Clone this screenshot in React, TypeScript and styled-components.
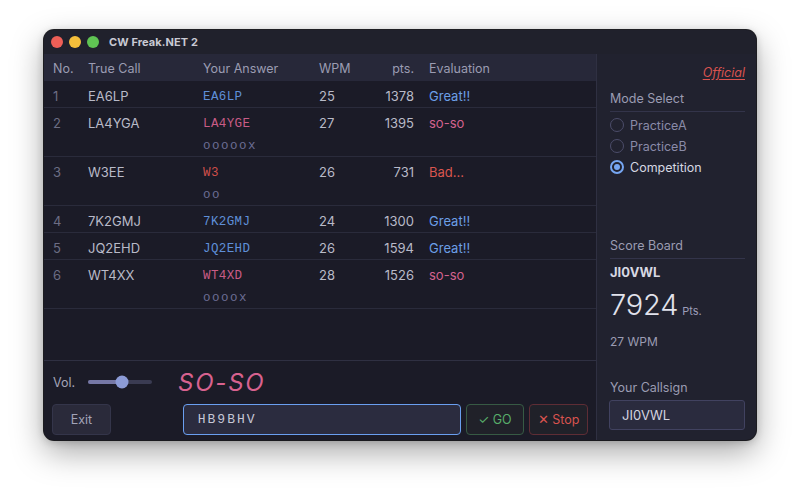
import React from "react";
import styled, { createGlobalStyle, css } from "styled-components";

const Global = createGlobalStyle`
  html, body { margin: 0; padding: 0; background: #ffffff; }
  body { font-family: Inter, "Noto Sans", sans-serif; -webkit-font-smoothing: antialiased; }
  * { box-sizing: border-box; }
`;

const Page = styled.div`
  width: 800px;
  height: 498px;
  padding: 30px 44px 0;
`;

const Window = styled.div`
  width: 712px;
  height: 410px;
  border-radius: 10px;
  background: #1b1b27;
  overflow: hidden;
  display: grid;
  grid-template-rows: 24px 1fr;
  box-shadow: 0 0 0 1px rgba(10, 10, 14, 0.9), 0 12px 32px rgba(0, 0, 0, 0.35), 0 2px 8px rgba(0, 0, 0, 0.2);
`;

const TitleBar = styled.div`
  background: #20212c;
  display: flex;
  align-items: center;
  padding-left: 7px;
  gap: 6px;
`;

const Light = styled.span<{ $c: string }>`
  width: 12px;
  height: 12px;
  border-radius: 50%;
  background: ${(p) => p.$c};
`;

const Title = styled.span`
  margin-left: 4px;
  font-size: 11px;
  font-weight: 700;
  color: #c9cad4;
  letter-spacing: 0.1px;
`;

const Body = styled.div`
  display: grid;
  grid-template-columns: 553px 1fr;
  grid-template-rows: 307px 1fr;
  min-height: 0;
`;

const TableArea = styled.div`
  background: #1b1b27;
  border-right: 1px solid #2f3042;
  border-bottom: 1px solid #2f3042;
  overflow: hidden;
`;

const cols = css`
  display: grid;
  grid-template-columns: 35px 115px 116px 40px 55px 1fr;
  padding-left: 9px;
`;

const HeaderRow = styled.div`
  ${cols};
  height: 27px;
  padding-top: 1px;
  align-items: center;
  background: #272839;
  color: #9b9cb2;
  font-size: 12.5px;
`;

const Row = styled.div`
  ${cols};
  padding-top: 5px;
  border-bottom: 1px solid #2a2b3b;
  font-size: 13px;
  color: #b9bac8;
`;

const Cell = styled.div<{ $right?: boolean; $pad?: boolean }>`
  line-height: 21px;
  height: 21px;
  white-space: nowrap;
  text-align: ${(p) => (p.$right ? "right" : "left")};
  padding-left: ${(p) => (p.$pad ? "15px" : "0")};
`;

const HeadCell = styled.div<{ $right?: boolean; $pad?: boolean }>`
  text-align: ${(p) => (p.$right ? "right" : "left")};
  padding-left: ${(p) => (p.$pad ? "15px" : "0")};
`;

const NoCell = styled(Cell)`
  color: #6c6d84;
`;

const AnswerCell = styled.div`
  display: flex;
  flex-direction: column;
`;

const tone = {
  good: "#6c9fe6",
  soso: "#d3628e",
  bad: "#d9564f",
};

type Tone = keyof typeof tone;

const Answer = styled.div<{ $t: Tone }>`
  font-family: "Liberation Mono", "DejaVu Sans Mono", monospace;
  font-size: 12.5px;
  letter-spacing: 0.4px;
  padding-top: 1px;
  line-height: 20px;
  height: 21px;
  color: ${(p) => (p.$t === "good" ? "#5f8fd8" : p.$t === "soso" ? "#c95c86" : "#cf4f4a")};
`;

const Marks = styled.div`
  font-family: "Liberation Mono", "DejaVu Sans Mono", monospace;
  font-size: 12.5px;
  letter-spacing: 1.5px;
  padding-top: 3px;
  line-height: 19px;
  height: 22px;
  color: #6b6d94;
`;

const Eval = styled(Cell)<{ $t: Tone }>`
  color: ${(p) => tone[p.$t]};
`;

const Side = styled.div`
  grid-row: 1 / span 2;
  grid-column: 2;
  background: #21222f;
  display: flex;
  flex-direction: column;
  padding: 0 11px 0 13px;
`;

const Official = styled.div`
  align-self: flex-end;
  margin-top: 11px;
  font-size: 12.5px;
  font-style: italic;
  color: #d9534f;
  text-decoration: underline;
  text-underline-offset: 2px;
`;

const SectionTitle = styled.div<{ $top: number }>`
  margin-top: ${(p) => p.$top}px;
  padding-bottom: 5px;
  border-bottom: 1px solid #33344a;
  font-size: 12.5px;
  color: #9b9cb2;
`;

const RadioList = styled.div`
  display: flex;
  flex-direction: column;
  gap: 5px;
  margin-top: 5px;
`;

const RadioRow = styled.div<{ $on?: boolean }>`
  display: flex;
  align-items: center;
  gap: 6px;
  height: 16px;
  font-size: 12.5px;
  color: ${(p) => (p.$on ? "#d6d7e2" : "#8a8ba8")};
`;

const Dot = styled.span<{ $on?: boolean }>`
  width: 14px;
  height: 14px;
  border-radius: 50%;
  border: ${(p) => (p.$on ? "2px solid #76a6f2" : "1.5px solid #4c4d6a")};
  display: grid;
  place-items: center;
  &::after {
    content: "";
    width: 6px;
    height: 6px;
    border-radius: 50%;
    background: ${(p) => (p.$on ? "#76a6f2" : "transparent")};
  }
`;

const Callsign = styled.div`
  margin-top: 5px;
  font-size: 13px;
  font-weight: 700;
  color: #d8d9e3;
`;

const Score = styled.div`
  display: flex;
  align-items: baseline;
  gap: 4px;
  margin-top: 7px;
`;

const ScoreNum = styled.span`
  font-size: 29px;
  font-weight: 300;
  color: #e2e3ec;
  letter-spacing: -0.2px;
`;

const ScoreUnit = styled.span`
  font-size: 11px;
  color: #9b9cb8;
`;

const Wpm = styled.div`
  margin-top: 12px;
  font-size: 12px;
  color: #9b9cb2;
`;

const Spacer = styled.div`
  flex: 1;
`;

const FieldLabel = styled.div`
  font-size: 12.5px;
  color: #9b9cb2;
  margin-bottom: 5px;
`;

const CallInput = styled.div`
  height: 30px;
  margin-bottom: 10px;
  margin-left: -1px;
  border: 1px solid #414260;
  border-radius: 3px;
  background: #2a2b3e;
  padding-left: 12px;
  display: flex;
  align-items: center;
  font-size: 13px;
  color: #d3d4e0;
`;

const Bottom = styled.div`
  background: #1b1b27;
  border-right: 1px solid #2f3042;
  padding: 7px 8px 0 8px;
  display: flex;
  flex-direction: column;
  gap: 8px;
`;

const TopLine = styled.div`
  display: flex;
  align-items: center;
  height: 28px;
`;

const VolLabel = styled.span`
  font-size: 12.5px;
  color: #a3a4b8;
  width: 36px;
  padding-left: 1px;
`;

const Track = styled.div`
  position: relative;
  width: 64px;
  height: 4px;
  border-radius: 2px;
  background: #3a3b52;
`;

const Fill = styled.div`
  height: 100%;
  border-radius: 2px;
  background: #7678a6;
`;

const Thumb = styled.div`
  position: absolute;
  top: 50%;
  width: 13px;
  height: 13px;
  border-radius: 50%;
  background: #8c9bd6;
  transform: translate(-50%, -50%);
`;

const Verdict = styled.span`
  margin-left: 26px;
  font-size: 24px;
  font-style: italic;
  letter-spacing: 1.8px;
  color: #d8628f;
`;

const Controls = styled.div`
  display: flex;
  align-items: center;
  gap: 5px;
  height: 31px;
`;

const Button = styled.button<{ $kind?: "go" | "stop" }>`
  height: 31px;
  width: 59px;
  border-radius: 4px;
  font-family: Inter, sans-serif;
  font-size: 12.5px;
  cursor: pointer;
  background: ${(p) => (p.$kind ? "#202129" : "#2a2a3a")};
  border: 1px solid
    ${(p) => (p.$kind === "go" ? "#375a44" : p.$kind === "stop" ? "#5e2d35" : "#34354a")};
  color: ${(p) => (p.$kind === "go" ? "#58ad6a" : p.$kind === "stop" ? "#d9534f" : "#a3a4b8")};
  padding: 0;
`;

const AnswerInput = styled.div`
  margin-left: 67px;
  width: 279px;
  height: 31px;
  border: 1.5px solid #6a9ff0;
  border-radius: 4px;
  background: #2b2c3f;
  display: flex;
  align-items: center;
  padding-left: 14px;
  font-family: "Liberation Mono", "DejaVu Sans Mono", monospace;
  font-size: 13px;
  letter-spacing: 2px;
  color: #c6c7d6;
`;

type Entry = {
  no: number;
  call: string;
  answer: string;
  wpm: number;
  pts: number;
  t: Tone;
  label: string;
  marks?: string;
};

const entries: Entry[] = [
  { no: 1, call: "EA6LP", answer: "EA6LP", wpm: 25, pts: 1378, t: "good", label: "Great!!" },
  { no: 2, call: "LA4YGA", answer: "LA4YGE", wpm: 27, pts: 1395, t: "soso", label: "so-so", marks: "ooooox" },
  { no: 3, call: "W3EE", answer: "W3", wpm: 26, pts: 731, t: "bad", label: "Bad...", marks: "oo" },
  { no: 4, call: "7K2GMJ", answer: "7K2GMJ", wpm: 24, pts: 1300, t: "good", label: "Great!!" },
  { no: 5, call: "JQ2EHD", answer: "JQ2EHD", wpm: 26, pts: 1594, t: "good", label: "Great!!" },
  { no: 6, call: "WT4XX", answer: "WT4XD", wpm: 28, pts: 1526, t: "soso", label: "so-so", marks: "oooox" },
];

const volume = 0.53;

export default function App() {
  return (
    <Page>
      <Global />
      <Window>
        <TitleBar>
          <Light $c="#ee5f57" />
          <Light $c="#f5bf3b" />
          <Light $c="#5fc453" />
          <Title>CW Freak.NET 2</Title>
        </TitleBar>
        <Body>
          <TableArea>
            <HeaderRow>
              <HeadCell>No.</HeadCell>
              <HeadCell>True Call</HeadCell>
              <HeadCell>Your Answer</HeadCell>
              <HeadCell>WPM</HeadCell>
              <HeadCell $right>pts.</HeadCell>
              <HeadCell $pad>Evaluation</HeadCell>
            </HeaderRow>
            {entries.map((e) => (
              <Row key={e.no}>
                <NoCell>{e.no}</NoCell>
                <Cell>{e.call}</Cell>
                <AnswerCell>
                  <Answer $t={e.t}>{e.answer}</Answer>
                  {e.marks && <Marks>{e.marks}</Marks>}
                </AnswerCell>
                <Cell>{e.wpm}</Cell>
                <Cell $right>{e.pts}</Cell>
                <Eval $pad $t={e.t}>
                  {e.label}
                </Eval>
              </Row>
            ))}
          </TableArea>
          <Side>
            <Official>Official</Official>
            <SectionTitle $top={11}>Mode Select</SectionTitle>
            <RadioList>
              <RadioRow>
                <Dot />
                PracticeA
              </RadioRow>
              <RadioRow>
                <Dot />
                PracticeB
              </RadioRow>
              <RadioRow $on>
                <Dot $on />
                Competition
              </RadioRow>
            </RadioList>
            <SectionTitle $top={63}>Score Board</SectionTitle>
            <Callsign>JI0VWL</Callsign>
            <Score>
              <ScoreNum>7924</ScoreNum>
              <ScoreUnit>Pts.</ScoreUnit>
            </Score>
            <Wpm>27 WPM</Wpm>
            <Spacer />
            <FieldLabel>Your Callsign</FieldLabel>
            <CallInput>JI0VWL</CallInput>
          </Side>
          <Bottom>
            <TopLine>
              <VolLabel>Vol.</VolLabel>
              <Track>
                <Fill style={{ width: `${volume * 100}%` }} />
                <Thumb style={{ left: `${volume * 100}%` }} />
              </Track>
              <Verdict>SO-SO</Verdict>
            </TopLine>
            <Controls>
              <Button>Exit</Button>
              <AnswerInput>HB9BHV</AnswerInput>
              <Button $kind="go">✓ GO</Button>
              <Button $kind="stop">✕ Stop</Button>
            </Controls>
          </Bottom>
        </Body>
      </Window>
    </Page>
  );
}
